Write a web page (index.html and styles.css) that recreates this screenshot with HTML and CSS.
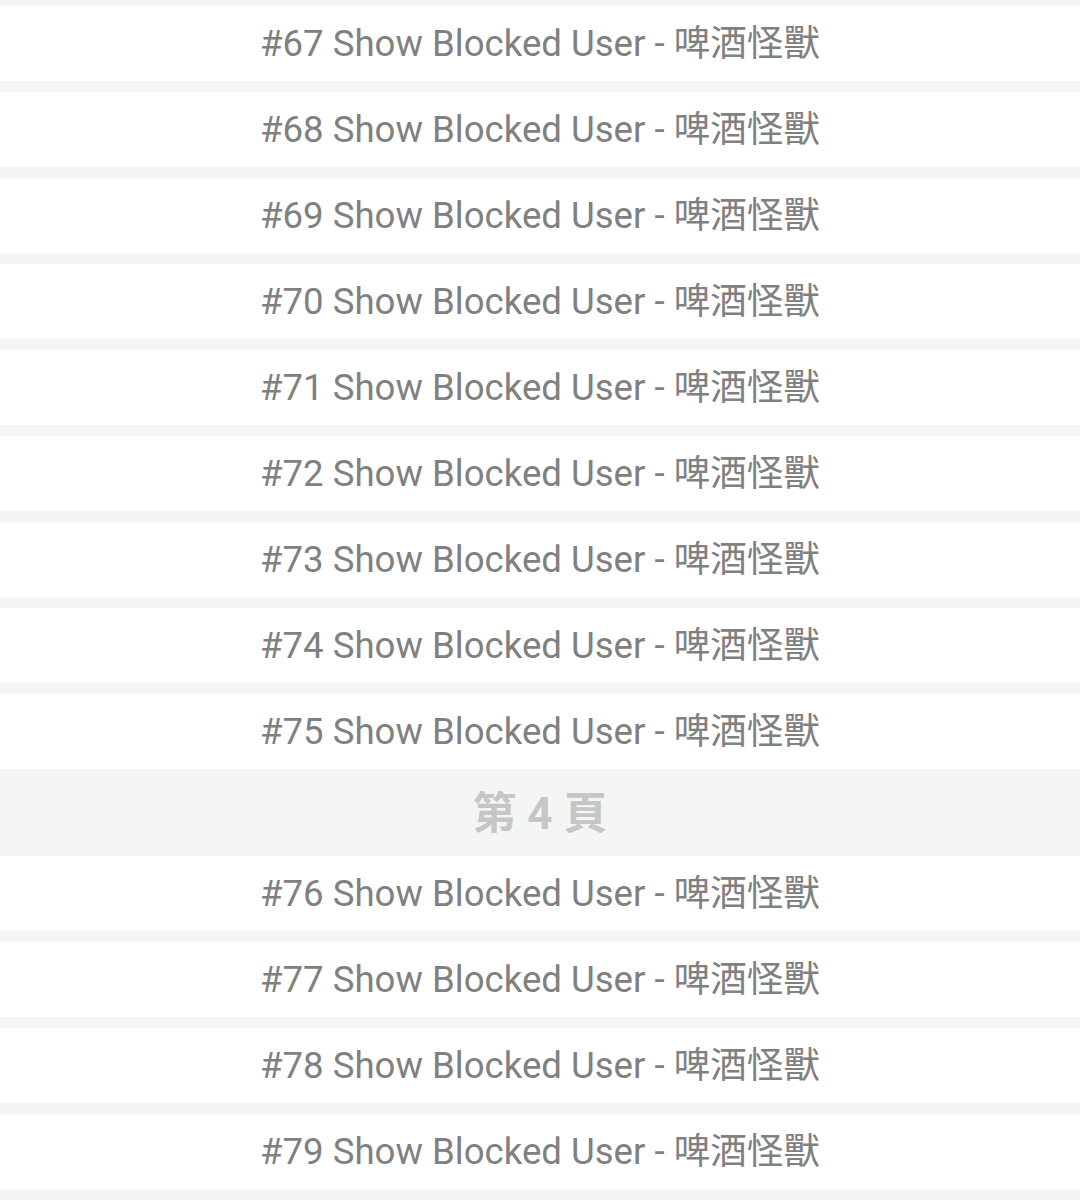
FILE: index.html
```html
<!DOCTYPE html>
<html lang="zh-Hant">
<head>
    <meta charset="UTF-8">
    <meta name="viewport" content="width=device-width, initial-scale=1.0">
    <title>Blocked Users</title>
    <link rel="stylesheet" href="styles.css">
</head>
<body>
    <div class="list">
        <div class="item">#67 Show Blocked User - 啤酒怪獸</div>
        <div class="item">#68 Show Blocked User - 啤酒怪獸</div>
        <div class="item">#69 Show Blocked User - 啤酒怪獸</div>
        <div class="item">#70 Show Blocked User - 啤酒怪獸</div>
        <div class="item">#71 Show Blocked User - 啤酒怪獸</div>
        <div class="item">#72 Show Blocked User - 啤酒怪獸</div>
        <div class="item">#73 Show Blocked User - 啤酒怪獸</div>
        <div class="item">#74 Show Blocked User - 啤酒怪獸</div>
        <div class="item">#75 Show Blocked User - 啤酒怪獸</div>
        <div class="page-header">第 4 頁</div>
        <div class="item">#76 Show Blocked User - 啤酒怪獸</div>
        <div class="item">#77 Show Blocked User - 啤酒怪獸</div>
        <div class="item">#78 Show Blocked User - 啤酒怪獸</div>
        <div class="item">#79 Show Blocked User - 啤酒怪獸</div>
    </div>
</body>
</html>
```

FILE: styles.css
```css
body {
    margin: 0;
    background-color: #f4f5f5;
    font-family: Roboto, "Noto Sans CJK TC", sans-serif;
}
.list {
    display: flex;
    flex-direction: column;
    padding-top: 6px;
}
.item {
    height: 75px;
    box-sizing: border-box;
    padding-bottom: 7px;
    margin-bottom: 11px;
    background-color: #ffffff;
    color: #808080;
    font-size: 36.6px;
    display: flex;
    align-items: center;
    justify-content: center;
}
.page-header {
    height: 87px;
    box-sizing: border-box;
    padding-bottom: 6px;
    margin-top: -11px;
    color: #c6c6c6;
    font-size: 44px;
    font-weight: bold;
    display: flex;
    align-items: center;
    justify-content: center;
}
```
